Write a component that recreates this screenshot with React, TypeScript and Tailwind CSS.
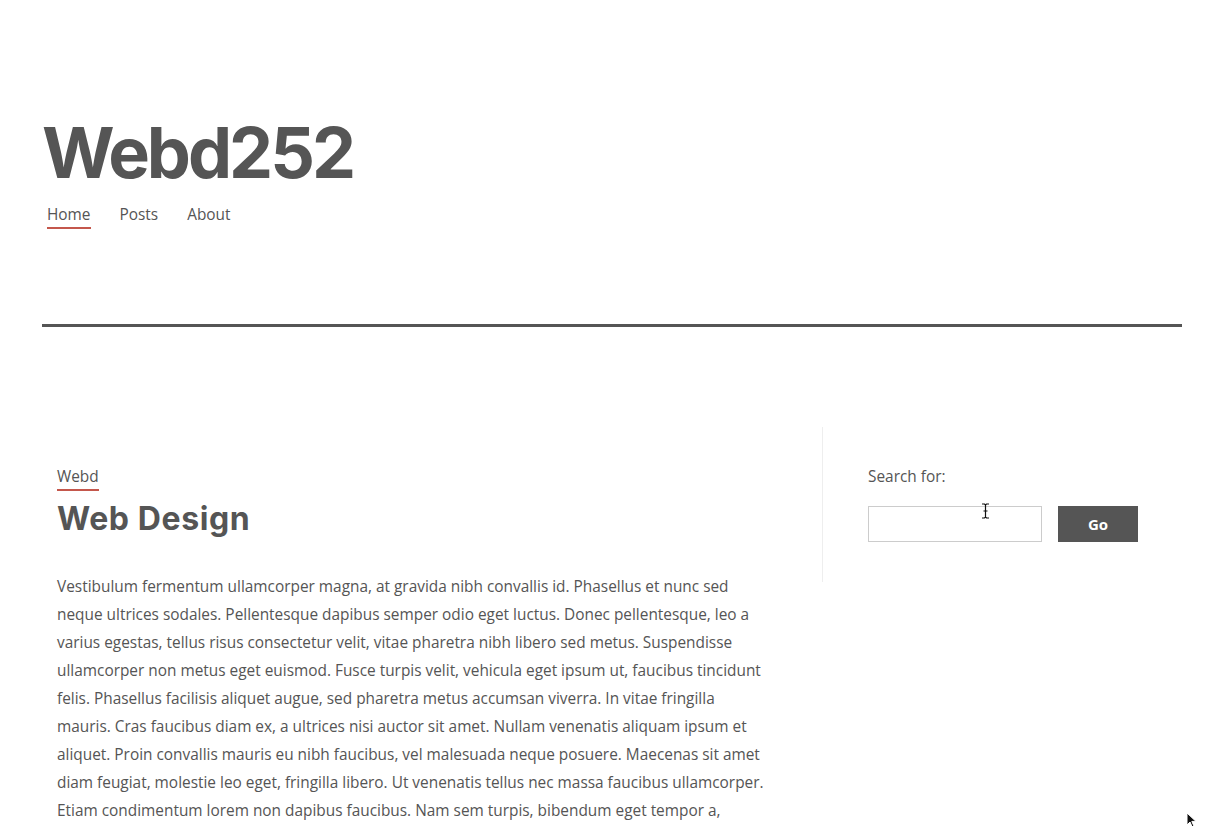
import React from "react";

const para =
  "Vestibulum fermentum ullamcorper magna, at gravida nibh convallis id. Phasellus et nunc sed neque ultrices sodales. Pellentesque dapibus semper odio eget luctus. Donec pellentesque, leo a varius egestas, tellus risus consectetur velit, vitae pharetra nibh libero sed metus. Suspendisse ullamcorper non metus eget euismod. Fusce turpis velit, vehicula eget ipsum ut, faucibus tincidunt felis. Phasellus facilisis aliquet augue, sed pharetra metus accumsan viverra. In vitae fringilla mauris. Cras faucibus diam ex, a ultrices nisi auctor sit amet. Nullam venenatis aliquam ipsum et aliquet. Proin convallis mauris eu nibh faucibus, vel malesuada neque posuere. Maecenas sit amet diam feugiat, molestie leo eget, fringilla libero. Ut venenatis tellus nec massa faucibus ullamcorper. Etiam condimentum lorem non dapibus faucibus. Nam sem turpis, bibendum eget tempor a,";

export default function App() {
  return (
    <div className="relative h-[826px] w-full overflow-hidden bg-white text-[#555] font-['Open_Sans',sans-serif]">
      <header className="px-[42px] pt-[118px]">
        <h1 className="text-[70px] leading-none font-bold tracking-[-3px] text-[#555] font-['Inter',sans-serif]">
          Webd252
        </h1>
        <nav className="mt-[15px] flex items-start gap-[29px] pl-[5px] text-[15.4px] leading-[24px]">
          <a className="flex flex-col text-[#555]">
            <span>Home</span>
            <span className="h-[1.5px] bg-[#c4574c]" />
          </a>
          <a className="text-[#555]">Posts</a>
          <a className="text-[#555]">About</a>
        </nav>
        <div className="mt-[95.5px] h-[3px] w-[1140px] bg-[#555]" />
      </header>

      <main className="ml-[42px] mt-[100px] flex w-[1140px]">
        <article className="w-[780px] shrink-0 pl-[15px] pr-[53px] pt-[37px]">
          <a className="inline-flex flex-col text-[15.4px] leading-[24px] text-[#555]">
            <span>Webd</span>
            <span className="h-[1.5px] bg-[#c4574c]" />
          </a>
          <h2 className="mt-[12px] text-[32px] leading-none font-bold tracking-[0.6px] text-[#555] font-['Inter',sans-serif]">
            Web Design
          </h2>
          <p className="mt-[38px] text-[15.4px] leading-[28px] text-[#555]">{para}</p>
        </article>
        <aside className="self-start w-[360px] shrink-0 border-l border-[#eee] pl-[45px] pt-[38px] pb-[40px]">
          <label className="block text-[15.4px] leading-[24px] text-[#555]">Search for:</label>
          <div className="mt-[17px] flex gap-[16px]">
            <input
              type="text"
              className="h-[36px] w-[174px] border border-[#ccc] bg-white outline-none"
            />
            <button className="h-[36px] w-[80px] bg-[#555] text-[15px] font-bold text-white">
              Go
            </button>
          </div>
        </aside>
      </main>

      <svg className="absolute left-[981px] top-[503px]" width="9" height="16" viewBox="0 0 9 16">
        <path d="M1 1h2.5L4.5 2 5.5 1H8M4.5 2v12M1 15h2.5l1-1 1 1H8M2.5 8h4" stroke="#111" strokeWidth="1.2" fill="none" />
      </svg>
      <svg className="absolute left-[1186px] top-[812px]" width="12" height="16" viewBox="0 0 12 16">
        <path d="M1 1v12l3-3 2.2 5 1.8-.8-2.2-4.8H10z" fill="#111" stroke="#fff" strokeWidth="1" />
      </svg>
    </div>
  );
}
